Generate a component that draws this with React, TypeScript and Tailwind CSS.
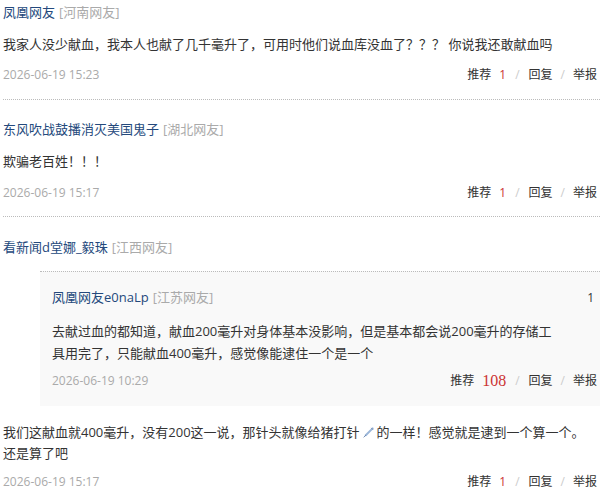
import React from 'react';

const font = "font-['Open_Sans','Noto_Sans_CJK_SC',sans-serif]";

const Actions = ({ count, big }: { count: string; big?: boolean }) => (
  <div className="flex items-center text-[12px] text-[#333]">
    <span>推荐</span>
    {big ? (
      <span className="ml-[8px] font-['Liberation_Serif',serif] text-[16px] text-[#c33]">{count}</span>
    ) : (
      <span className="ml-[8px] text-[#c33]">{count}</span>
    )}
    <span className="mx-[9px] text-[#ccc]">/</span>
    <span>回复</span>
    <span className="mx-[8px] text-[#ccc]">/</span>
    <span>举报</span>
  </div>
);

const User = ({ name, loc }: { name: string; loc: string }) => (
  <div className="flex h-[20px] items-center text-[13px]">
    <span className="text-[#24497c]">{name}</span>
    <span className="ml-[4px] text-[#aaa]">[{loc}]</span>
  </div>
);

const DateRow = ({ date, count, big }: { date: string; count: string; big?: boolean }) => (
  <div className="flex h-[20px] items-center justify-between">
    <span className="text-[12px] text-[#aaa]">{date}</span>
    <Actions count={count} big={big} />
  </div>
);

const Syringe = () => (
  <svg width="11" height="11" viewBox="0 0 12 12" className="mx-[3px] inline-block align-[-1px]">
    <path d="M10.5 1.5 L3 9" stroke="#9bb6d8" strokeWidth="2.2" strokeLinecap="round" />
    <path d="M3 9 L1 11" stroke="#6a87b0" strokeWidth="1" strokeLinecap="round" />
    <path d="M9 1 L11 3" stroke="#6a87b0" strokeWidth="1" />
  </svg>
);

export default function App() {
  return (
    <div className={`${font} w-[600px] bg-white pl-[3px] text-[#333]`}>
      {/* comment 1 */}
      <div className="border-b border-dotted border-[#bbb] pt-[3px] pb-[14px]">
        <User name="凤凰网友" loc="河南网友" />
        <p className="mt-[10px] text-[13px] leading-[22px]">
          我家人没少献血，我本人也献了几千毫升了，可用时他们说血库没血了？？？ 你说我还敢献血吗
        </p>
        <div className="mt-[10px] pr-[3px]">
          <DateRow date="2026-06-19 15:23" count="1" />
        </div>
      </div>

      {/* comment 2 */}
      <div className="border-b border-dotted border-[#bbb] pt-[20px] pb-[13px]">
        <User name="东风吹战鼓播消灭美国鬼子" loc="湖北网友" />
        <p className="mt-[10px] text-[13px] leading-[22px]">欺骗老百姓！！！</p>
        <div className="mt-[11px] pr-[3px]">
          <DateRow date="2026-06-19 15:17" count="1" />
        </div>
      </div>

      {/* comment 3 with quote */}
      <div className="pt-[21px]">
        <User name="看新闻d堂娜_毅珠" loc="江西网友" />
        <div className="mt-[13px] ml-[37px] border-t border-dotted border-[#bbb] bg-[#f9f9f9] pt-[16px] pr-[3px] pb-[15px] pl-[12px]">
          <div className="flex items-center justify-between">
            <User name="凤凰网友e0naLp" loc="江苏网友" />
            <span className="pr-[3px] text-[12px] text-[#333]">1</span>
          </div>
          <p className="mt-[12px] w-[508px] text-[13px] leading-[22px]">
            去献过血的都知道，献血200毫升对身体基本没影响，但是基本都会说200毫升的存储工具用完了，只能献血400毫升，感觉像能逮住一个是一个
          </p>
          <div className="mt-[7px]">
            <DateRow date="2026-06-19 10:29" count="108" big />
          </div>
        </div>
        <p className="mt-[16px] w-[584px] text-[13px] leading-[21px]">
          我们这献血就400毫升，没有200这一说，那针头就像给猪打针
          <Syringe />
          的一样！感觉就是逮到一个算一个。还是算了吧
        </p>
        <div className="mt-[8px] pr-[3px] pb-[10px]">
          <DateRow date="2026-06-19 15:17" count="1" />
        </div>
      </div>
    </div>
  );
}
